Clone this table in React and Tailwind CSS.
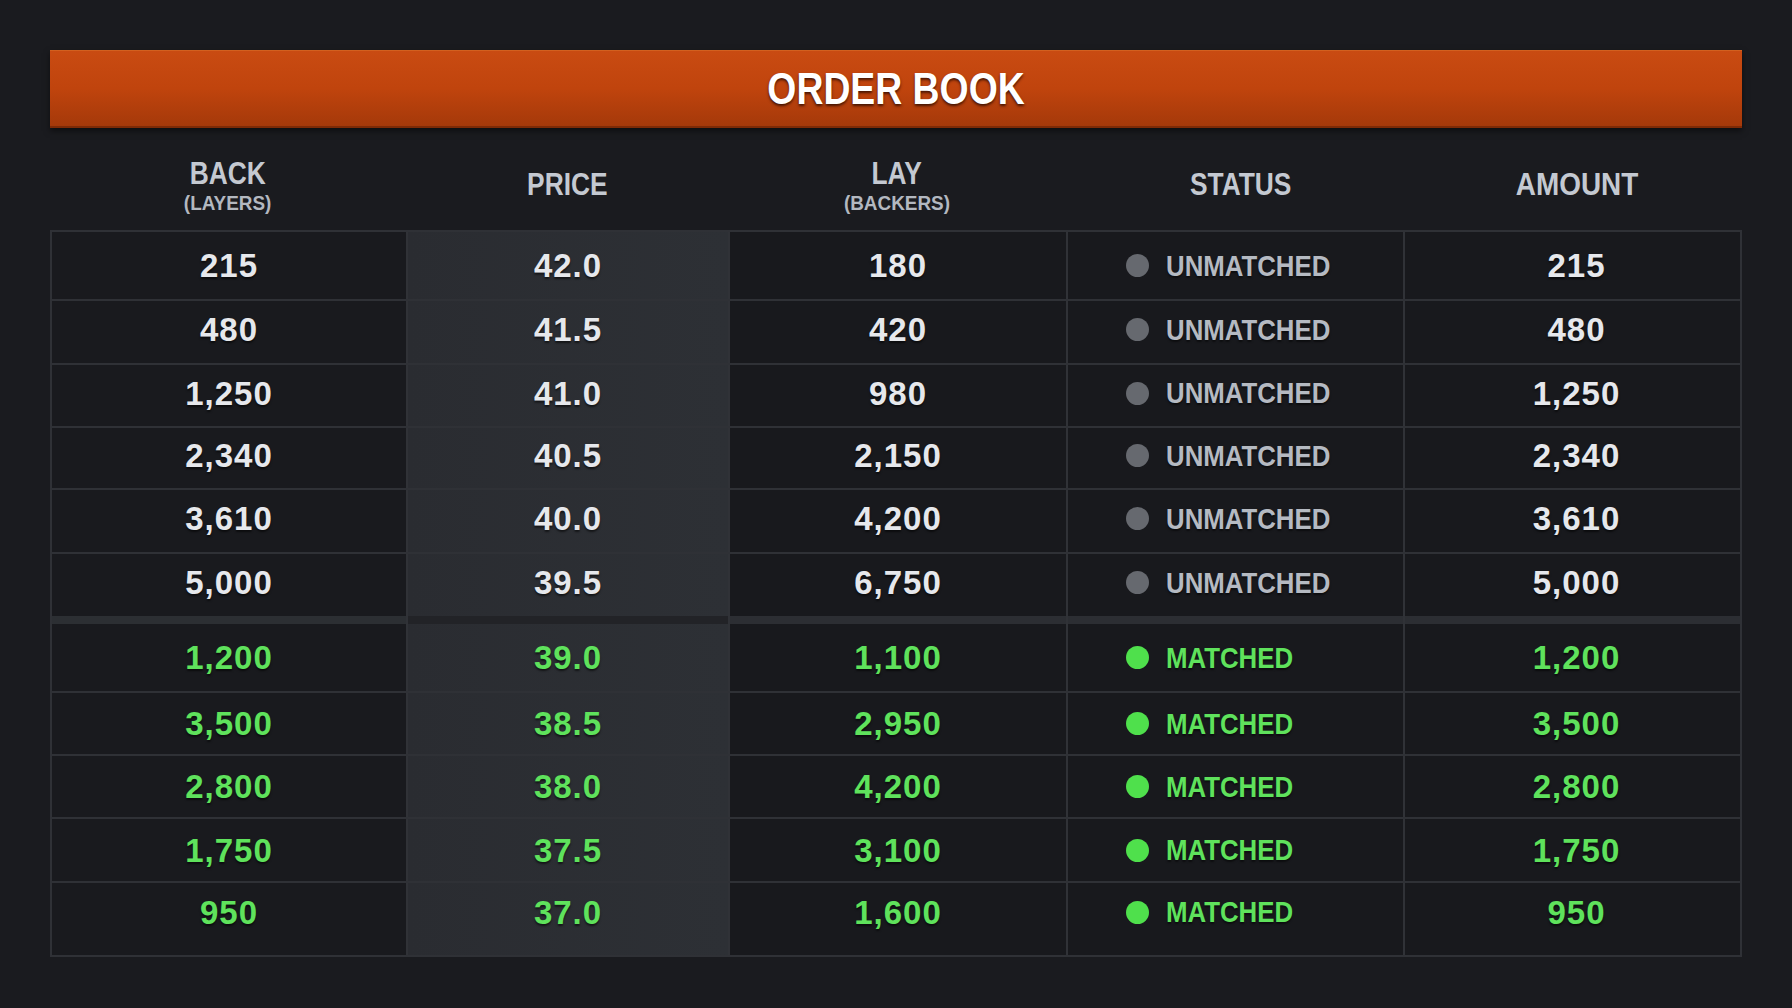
import React from "react";

const unmatched = [
  { back: "215", price: "42.0", lay: "180", amount: "215", h: "h-[67px]", first: true },
  { back: "480", price: "41.5", lay: "420", amount: "480", h: "h-[64px]", pad: "pb-[5px]" },
  { back: "1,250", price: "41.0", lay: "980", amount: "1,250", h: "h-[63px]", pad: "pb-[5px]" },
  { back: "2,340", price: "40.5", lay: "2,150", amount: "2,340", h: "h-[62px]", pad: "pb-[5px]" },
  { back: "3,610", price: "40.0", lay: "4,200", amount: "3,610", h: "h-[64px]", pad: "pb-[5px]" },
  { back: "5,000", price: "39.5", lay: "6,750", amount: "5,000", h: "h-[64px]", pad: "pb-[5px]" },
];

const matched = [
  { back: "1,200", price: "39.0", lay: "1,100", amount: "1,200", h: "h-[67px]", first: true },
  { back: "3,500", price: "38.5", lay: "2,950", amount: "3,500", h: "h-[63px]" },
  { back: "2,800", price: "38.0", lay: "4,200", amount: "2,800", h: "h-[63px]" },
  { back: "1,750", price: "37.5", lay: "3,100", amount: "1,750", h: "h-[64px]" },
  { back: "950", price: "37.0", lay: "1,600", amount: "950", h: "h-[74px]", pad: "pb-[14px]" },
];

const cols = "grid grid-cols-[354px_322px_338px_337px_337px]";
const num = "font-['Liberation_Sans',Arial,sans-serif] font-bold text-[33px] tracking-[0.03em] leading-none [text-shadow:0_2px_2px_rgba(0,0,0,0.55)]";
// no narrow face installed, so caps labels get squeezed horizontally
const label = "font-['Liberation_Sans',Arial,sans-serif] font-bold leading-none";

const Row = ({ row, isMatched }) => {
  const valueColor = isMatched ? "text-[#5fe25c]" : "text-[#e6e8ec]";
  const pad = row.pad || "";
  const cell = `flex items-center justify-center ${pad}`;
  return (
    <div
      className={`${cols} ${row.h} ${row.first ? "" : "border-t-2 border-[#2f3136]"}`}
    >
      <div className={`${cell} ${num} ${valueColor} bg-[#191a1e]`}>{row.back}</div>
      <div
        className={`${cell} ${num} ${valueColor} border-l-2 border-[#303237] bg-gradient-to-r from-[#2a2c31] to-[#2d3035]`}
      >
        {row.price}
      </div>
      <div className={`${cell} ${num} ${valueColor} border-l-2 border-[#303237] bg-[#18191d]`}>
        {row.lay}
      </div>
      <div
        className={`flex items-center gap-[17px] pl-[58px] ${pad} border-l-2 border-[#303237] bg-[#18191d]`}
      >
        <span
          className={`shrink-0 w-[23px] h-[23px] rounded-full ${
            isMatched ? "bg-[#4fe04c]" : "bg-[#66696f]"
          }`}
        />
        <span
          className={`${label} text-[30px] scale-x-[0.86] origin-left whitespace-nowrap ${
            isMatched ? "text-[#5fe25c]" : "text-[#b5bac2]"
          } [text-shadow:0_2px_2px_rgba(0,0,0,0.5)]`}
        >
          {isMatched ? "MATCHED" : "UNMATCHED"}
        </span>
      </div>
      <div
        className={`${cell} pl-[8px] ${num} ${valueColor} border-l-2 border-[#303237] bg-[#18191d]`}
      >
        {row.amount}
      </div>
    </div>
  );
};

const HeaderLabel = ({ title, sub, squeeze = "scale-x-[0.85]", extra = "" }) => (
  <div className={`flex flex-col items-center justify-center ${extra}`}>
    <span className={`${label} text-[31px] text-[#c4c9d1] ${squeeze} whitespace-nowrap`}>
      {title}
    </span>
    {sub && (
      <span
        className={`${label} text-[21px] text-[#b3b8c0] scale-x-[0.9] mt-[3px] whitespace-nowrap`}
      >
        {sub}
      </span>
    )}
  </div>
);

export default function App() {
  return (
    <div className="w-full h-[1008px] bg-[#1a1b1f] px-[50px] pt-[50px]">
      {/* title bar */}
      <div className="h-[78px] flex items-center justify-center bg-gradient-to-b from-[#c94b12] via-[#c0440d] to-[#a5390a] border-t border-[#d2601f] border-b-2 border-b-[#7e2a06] shadow-[0_3px_6px_rgba(0,0,0,0.5)]">
        <h1
          className={`${label} text-[45px] text-white scale-x-[0.83] whitespace-nowrap [text-shadow:0_2px_3px_rgba(40,10,0,0.8)]`}
        >
          ORDER BOOK
        </h1>
      </div>

      {/* column headings */}
      <div className="grid grid-cols-[356px_322px_338px_337px_339px] h-[102px]">
        <HeaderLabel title="BACK" sub="(LAYERS)" extra="pt-[12px]" />
        <HeaderLabel title="PRICE" extra="pt-[10px]" />
        <HeaderLabel title="LAY" sub="(BACKERS)" extra="pt-[12px]" />
        <HeaderLabel title="STATUS" extra="pt-[10px] pl-[12px]" />
        <HeaderLabel title="AMOUNT" squeeze="scale-x-[0.9]" extra="pt-[10px] pl-[10px]" />
      </div>

      {/* table */}
      <div className="border-2 border-[#2f3136] bg-[#18191d]">
        {unmatched.map((row) => (
          <Row key={"u" + row.back} row={row} isMatched={false} />
        ))}

        <div className={`${cols} h-[8px]`}>
          <div className="bg-[#2c2f33]" />
          <div className="border-l-2 border-[#303237] bg-[#222327]" />
          <div className="border-l-2 border-[#303237] bg-[#2c2e33]" />
          <div className="border-l-2 border-[#303237] bg-[#2c2e33]" />
          <div className="border-l-2 border-[#303237] bg-[#2c2e33]" />
        </div>

        {matched.map((row) => (
          <Row key={"m" + row.back} row={row} isMatched />
        ))}
      </div>
    </div>
  );
}
